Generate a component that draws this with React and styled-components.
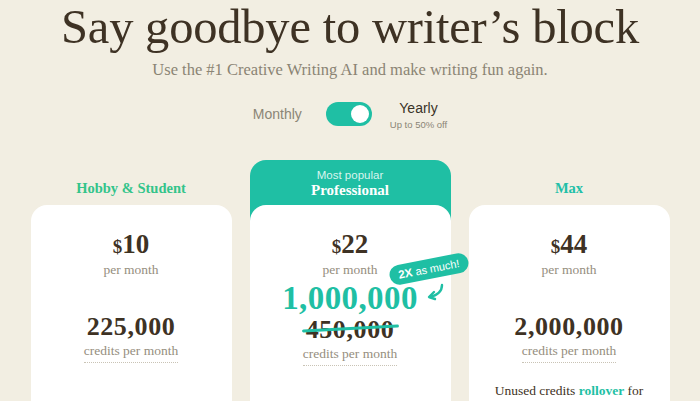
import React, { useState } from 'react';
import styled, { createGlobalStyle } from 'styled-components';

const GlobalStyle = createGlobalStyle`
  body {
    margin: 0;
    background: #f2eee2;
    font-family: "Liberation Serif", serif;
    overflow: hidden;
  }
`;

const Page = styled.div`
  display: flex;
  flex-direction: column;
  align-items: center;
  width: 700px;
  height: 401px;
  overflow: hidden;
`;

const Title = styled.h1`
  margin: 0;
  font-family: "Liberation Serif", serif;
  font-weight: 400;
  font-size: 48.5px;
  line-height: 54px;
  letter-spacing: -0.2px;
  color: #3e3224;
  white-space: nowrap;
`;

const Subtitle = styled.p`
  margin: 6px 0 0;
  font-size: 16.5px;
  line-height: 20px;
  color: #8b8474;
`;

const ToggleRow = styled.div`
  display: flex;
  align-items: center;
  gap: 24px;
  margin-top: 22px;
  font-family: "Liberation Sans", sans-serif;
`;

const ToggleLabel = styled.span`
  font-size: 14px;
  color: ${p => (p.active ? '#3a3328' : '#8b8576')};
`;

const Switch = styled.button`
  width: 46px;
  height: 24px;
  border: none;
  border-radius: 12px;
  padding: 3px;
  background: ${p => (p.on ? '#1fbfa4' : '#cfc9bb')};
  display: flex;
  justify-content: ${p => (p.on ? 'flex-end' : 'flex-start')};
  cursor: pointer;
`;

const Knob = styled.span`
  width: 18px;
  height: 18px;
  border-radius: 50%;
  background: #fff;
`;

const YearlyBox = styled.div`
  display: flex;
  flex-direction: column;
  align-items: center;
  gap: 3px;
  margin: -2px 0 -4px -6px;
`;

const Discount = styled.span`
  font-size: 9.5px;
  color: #8b8576;
`;

const Plans = styled.div`
  display: grid;
  grid-template-columns: repeat(3, 201px);
  column-gap: 18px;
  margin-top: 34px;
  align-items: end;
`;

const PlanColumn = styled.div`
  display: flex;
  flex-direction: column;
  align-items: center;
`;

const PlanName = styled.div`
  font-weight: 700;
  font-size: 14.5px;
  color: ${p => p.color};
  margin-bottom: 8px;
`;

const PopularHead = styled.div`
  width: 100%;
  background: #1fbfa4;
  border-radius: 16px 16px 0 0;
  display: flex;
  flex-direction: column;
  align-items: center;
  padding: 9px 0 22px;
  margin-bottom: -16px;
`;

const PopularTag = styled.span`
  font-family: "Liberation Sans", sans-serif;
  font-size: 11.5px;
  color: #d8f5ee;
`;

const PopularName = styled.span`
  font-weight: 700;
  font-size: 15px;
  color: #fff;
  margin-top: 1px;
`;

const Card = styled.div`
  position: relative;
  width: 100%;
  height: 220px;
  background: #fff;
  border-radius: 16px 16px 0 0;
  display: flex;
  flex-direction: column;
  align-items: center;
  padding-top: 25px;
  box-sizing: border-box;
`;

const Price = styled.div`
  font-weight: 700;
  font-size: 27px;
  line-height: 28px;
  color: #3e3224;
  span {
    font-size: 19px;
  }
`;

const Period = styled.div`
  font-size: 13.5px;
  color: #958e7e;
  margin-top: 1px;
`;

const Credits = styled.div`
  display: flex;
  flex-direction: column;
  align-items: center;
  margin-top: ${p => (p.big ? '3px' : '34px')};
`;

const BigCredits = styled.div`
  font-weight: 700;
  font-size: 33px;
  line-height: 34px;
  color: #1fbfa4;
  letter-spacing: 0.4px;
`;

const Amount = styled.div`
  position: relative;
  font-weight: 700;
  font-size: 26px;
  line-height: 29px;
  color: #3e3224;
  letter-spacing: 0.6px;
`;

const Strike = styled.span`
  position: absolute;
  left: -4px;
  right: -4px;
  top: 12px;
  height: 3px;
  border-radius: 2px;
  background: #1fbfa4;
  transform: rotate(-3deg);
`;

const CreditsNote = styled.div`
  font-size: 13.5px;
  color: #958e7e;
  padding-bottom: 3px;
  border-bottom: 1px dotted #c9c3b5;
  margin-top: 2px;
`;

const Rollover = styled.div`
  margin-top: 20px;
  font-size: 13.5px;
  color: #3e3224;
  b {
    color: #1fbfa4;
  }
`;

const Badge = styled.div`
  position: absolute;
  top: 54px;
  right: -18px;
  background: #1fbfa4;
  color: #fff;
  font-family: "Liberation Sans", sans-serif;
  font-size: 11px;
  padding: 4px 9px;
  border-radius: 10px;
  transform: rotate(-11deg);
  white-space: nowrap;
  b {
    font-size: 11.5px;
  }
`;

const Arrow = styled.svg`
  position: absolute;
  top: 78px;
  right: 4px;
`;

function PriceBlock({ price }) {
  return (
    <>
      <Price><span>$</span>{price}</Price>
      <Period>per month</Period>
    </>
  );
}

export default function App() {
  const [yearly, setYearly] = useState(true);

  return (
    <Page>
      <GlobalStyle />
      <Title>Say goodbye to writer’s block</Title>
      <Subtitle>Use the #1 Creative Writing AI and make writing fun again.</Subtitle>

      <ToggleRow>
        <ToggleLabel active={!yearly}>Monthly</ToggleLabel>
        <Switch on={yearly} onClick={() => setYearly(!yearly)}>
          <Knob />
        </Switch>
        <YearlyBox>
          <ToggleLabel active={yearly}>Yearly</ToggleLabel>
          <Discount>Up to 50% off</Discount>
        </YearlyBox>
      </ToggleRow>

      <Plans>
        <PlanColumn>
          <PlanName color="#33c48a">Hobby &amp; Student</PlanName>
          <Card>
            <PriceBlock price="10" />
            <Credits>
              <Amount>225,000</Amount>
              <CreditsNote>credits per month</CreditsNote>
            </Credits>
          </Card>
        </PlanColumn>

        <PlanColumn>
          <PopularHead>
            <PopularTag>Most popular</PopularTag>
            <PopularName>Professional</PopularName>
          </PopularHead>
          <Card>
            <PriceBlock price="22" />
            <Credits big>
              <BigCredits>1,000,000</BigCredits>
              <Amount>450,000<Strike /></Amount>
              <CreditsNote>credits per month</CreditsNote>
            </Credits>
            <Badge><b>2X</b> as much!</Badge>
            <Arrow width="22" height="18" viewBox="0 0 22 18" fill="none">
              <path d="M17 2 C17 8 13 12 5 14" stroke="#1fbfa4" strokeWidth="2.4" strokeLinecap="round" />
              <path d="M9 9 L4 14 L10 16" stroke="#1fbfa4" strokeWidth="2.4" strokeLinecap="round" strokeLinejoin="round" />
            </Arrow>
          </Card>
        </PlanColumn>

        <PlanColumn>
          <PlanName color="#22bfa8">Max</PlanName>
          <Card>
            <PriceBlock price="44" />
            <Credits>
              <Amount>2,000,000</Amount>
              <CreditsNote>credits per month</CreditsNote>
            </Credits>
            <Rollover>Unused credits <b>rollover</b> for</Rollover>
          </Card>
        </PlanColumn>
      </Plans>
    </Page>
  );
}
